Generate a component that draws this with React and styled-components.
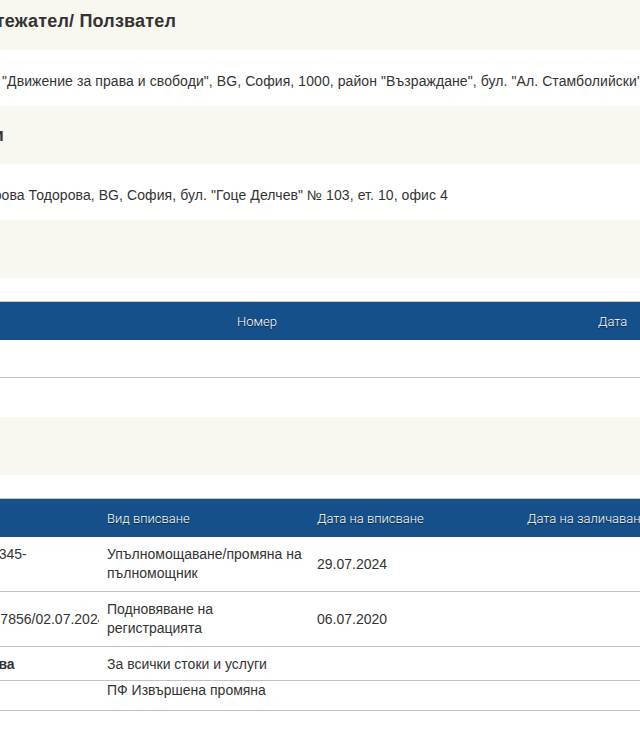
import React from "react";
import styled, { createGlobalStyle } from "styled-components";

const GlobalStyle = createGlobalStyle`
  html, body {
    margin: 0;
    padding: 0;
    background: #ffffff;
    overflow: hidden;
  }
  body {
    font-family: "Liberation Sans", Helvetica, Arial, sans-serif;
    color: #333333;
  }
`;

const Page = styled.div`
  width: 1087px;
  margin: -8px 0 0 -136px;
`;

const SectionHeading = styled.div`
  display: flex;
  align-items: center;
  height: 58px;
  background: #f8f7f0;
  font-size: 18px;
  font-weight: 700;
  letter-spacing: 0.2px;
  color: #333333;
  white-space: nowrap;
`;

const ValueRow = styled.div`
  padding: 21px 0 15px;
  font-size: 14px;
  line-height: 20px;
  letter-spacing: 0.08px;
  color: #333333;
  white-space: nowrap;
`;

const Table = styled.div`
  margin: ${({ $top }) => $top}px 0 ${({ $bottom }) => $bottom || 0}px;
  border-top: 1px solid #c4c4c4;
`;

const HeadRow = styled.div`
  display: grid;
  grid-template-columns: ${({ $cols }) => $cols};
  height: 38px;
  background: #16508a;
`;

const HeadCell = styled.div`
  display: flex;
  align-items: center;
  min-width: 0;
  overflow: hidden;
  padding: 0 8px;
  font-family: Roboto, "Liberation Sans", sans-serif;
  font-weight: 300;
  font-size: 13px;
  color: #ffffff;
  white-space: nowrap;
  text-shadow: 0 1px 1px rgba(0, 0, 0, 0.6);
`;

const BodyRow = styled.div`
  display: grid;
  grid-template-columns: ${({ $cols }) => $cols};
  align-items: center;
  min-height: ${({ $height }) => $height || 0}px;
  padding: ${({ $padTop }) => $padTop ?? 8}px 0 ${({ $padBottom }) => $padBottom ?? 8}px;
  box-sizing: border-box;
  border-bottom: 1px solid #c0c0c0;
  font-size: 14px;
  line-height: 19px;
  color: #333333;
`;

const Cell = styled.div`
  min-width: 0;
  overflow: hidden;
  padding: 0 2px 0 8px;
  font-weight: ${({ $bold }) => ($bold ? 700 : 400)};
  white-space: ${({ $nowrap }) => ($nowrap ? "nowrap" : "normal")};
`;

const priorityCols = "365px 361px 361px";
const recordCols = "235px 210px 210px 210px 1fr";

const records = [
  {
    number: "Заявка № 2024/012345- 29.07.2024",
    kind: "Упълномощаване/промяна на пълномощник",
    date: "29.07.2024",
  },
  {
    number: "Рег. № 2020/0000847856/02.07.2024",
    kind: "Подновяване на регистрацията",
    date: "06.07.2020",
    nowrap: true,
  },
];

const App = () => {
  return (
    <>
      <GlobalStyle />
      <Page>
        <SectionHeading>Заявител/ Притежател/ Ползвател</SectionHeading>
        <ValueRow>
          Политическа партия "Движение за права и свободи", BG, София, 1000,
          район "Възраждане", бул. "Ал. Стамболийски" № 45А
        </ValueRow>
        <SectionHeading>Представители</SectionHeading>
        <ValueRow>
          адв. Радостина Петрова Тодорова, BG, София, бул. "Гоце Делчев" №
          103, ет. 10, офис 4
        </ValueRow>
        <SectionHeading>Приоритет</SectionHeading>

        <Table $top={23} $bottom={39}>
          <HeadRow $cols={priorityCols}>
            <HeadCell>Държава</HeadCell>
            <HeadCell>Номер</HeadCell>
            <HeadCell>Дата</HeadCell>
          </HeadRow>
          <BodyRow $cols={priorityCols} $height={38} $padTop={0} $padBottom={0}>
            <Cell />
            <Cell />
            <Cell />
          </BodyRow>
        </Table>

        <SectionHeading>Вписвания</SectionHeading>

        <Table $top={23}>
          <HeadRow $cols={recordCols}>
            <HeadCell>Номер на вписване</HeadCell>
            <HeadCell>Вид вписване</HeadCell>
            <HeadCell>Дата на вписване</HeadCell>
            <HeadCell>Дата на заличаване</HeadCell>
            <HeadCell>Статус</HeadCell>
          </HeadRow>
          {records.map((r) => (
            <BodyRow key={r.number} $cols={recordCols}>
              <Cell $nowrap={r.nowrap}>{r.number}</Cell>
              <Cell>{r.kind}</Cell>
              <Cell>{r.date}</Cell>
              <Cell />
              <Cell />
            </BodyRow>
          ))}
          <BodyRow $cols={recordCols} $padTop={8} $padBottom={6}>
            <Cell $bold $nowrap>Ограничените права</Cell>
            <Cell $nowrap>За всички стоки и услуги</Cell>
            <Cell />
            <Cell />
            <Cell />
          </BodyRow>
          <BodyRow $cols={recordCols} $padTop={0} $padBottom={10}>
            <Cell />
            <Cell $nowrap>ПФ Извършена промяна</Cell>
            <Cell />
            <Cell />
            <Cell />
          </BodyRow>
        </Table>
      </Page>
    </>
  );
};

export default App;
